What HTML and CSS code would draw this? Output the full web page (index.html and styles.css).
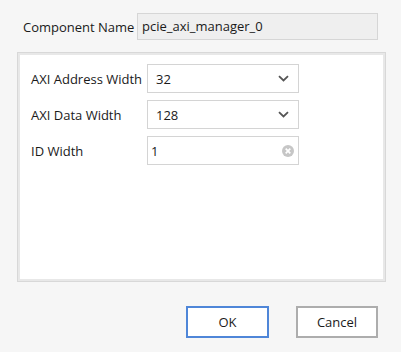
FILE: index.html
```html
<!DOCTYPE html>
<html lang="en">
<head>
    <meta charset="UTF-8">
    <title>Customize IP</title>
    <link rel="stylesheet" href="styles.css">
</head>
<body>
    <div class="dialog">
        <div class="name-row">
            <span class="name-label">Component Name</span>
            <div class="name-value">pcie_axi_manager_0</div>
        </div>

        <div class="panel">
            <div class="param-row">
                <span class="param-label">AXI Address Width</span>
                <div class="field select">
                    <span>32</span>
                    <svg class="chevron" width="11" height="7" viewBox="0 0 11 7"><path d="M1 1.2 L5.5 5.5 L10 1.2" fill="none" stroke="#555" stroke-width="1.8"/></svg>
                </div>
            </div>
            <div class="param-row">
                <span class="param-label">AXI Data Width</span>
                <div class="field select">
                    <span>128</span>
                    <svg class="chevron" width="11" height="7" viewBox="0 0 11 7"><path d="M1 1.2 L5.5 5.5 L10 1.2" fill="none" stroke="#555" stroke-width="1.8"/></svg>
                </div>
            </div>
            <div class="param-row">
                <span class="param-label">ID Width</span>
                <div class="field text">
                    <span>1</span>
                    <svg class="clear" width="12" height="12" viewBox="0 0 12 12"><circle cx="6" cy="6" r="6" fill="#c6c6c6"/><path d="M3.7 3.7 L8.3 8.3 M8.3 3.7 L3.7 8.3" stroke="#fff" stroke-width="1.7"/></svg>
                </div>
            </div>
        </div>

        <div class="buttons">
            <button class="btn btn-ok">OK</button>
            <button class="btn">Cancel</button>
        </div>
    </div>
</body>
</html>
```

FILE: styles.css
```css
body {
    margin: 0;
    background-color: #f6f6f6;
    font-family: "Open Sans", "Noto Sans", sans-serif;
    font-size: 13px;
    color: #1a1a1a;
}
.dialog {
    width: 401px;
    height: 352px;
    box-sizing: border-box;
    padding-top: 13px;
}
.name-row {
    display: flex;
    align-items: center;
    padding-left: 23px;
}
.name-label {
    width: 114px;
}
.name-value {
    width: 241px;
    height: 27px;
    box-sizing: border-box;
    border: 1px solid #d6d6d6;
    background-color: #efefef;
    padding-left: 4px;
    line-height: 25px;
}
.panel {
    margin: 12px 0 0 17px;
    width: 369px;
    height: 230px;
    box-sizing: border-box;
    border: 1px solid #d8d8d8;
    box-shadow: inset 0 0 0 2px #e8e8e8;
    background-color: #fff;
    padding: 11px 0 0 13px;
}
.param-row {
    display: flex;
    align-items: center;
    margin-bottom: 7px;
}
.param-label {
    width: 116px;
}
.field {
    width: 152px;
    height: 29px;
    box-sizing: border-box;
    border: 1px solid #d4d4d4;
    display: flex;
    align-items: center;
    justify-content: space-between;
    background-color: #fff;
}
.select {
    padding: 0 9px 0 8px;
}
.text {
    padding: 0 4px 0 3px;
}
.buttons {
    display: flex;
    justify-content: flex-end;
    gap: 27px;
    margin-top: 24px;
    padding-right: 23px;
}
.btn {
    width: 82px;
    height: 32px;
    box-sizing: border-box;
    border: 2px solid #adadad;
    background-color: #fff;
    font-family: inherit;
    font-size: 13px;
    color: #1a1a1a;
    padding: 0;
}
.btn-ok {
    width: 83px;
    border-color: #4f86d8;
}
```
